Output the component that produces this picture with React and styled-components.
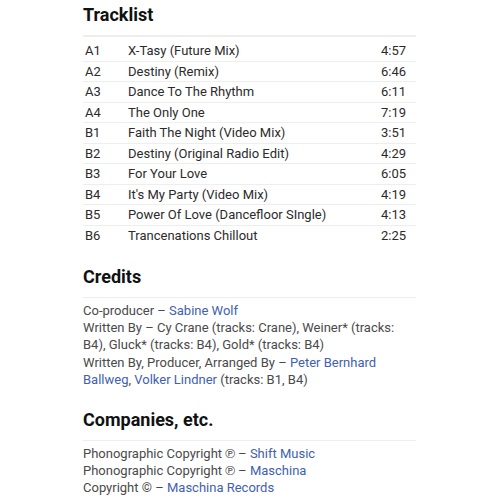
import React from 'react';
import styled, { createGlobalStyle } from 'styled-components';

const GlobalStyle = createGlobalStyle`
  body {
    margin: 0;
    background: #fff;
    font-family: Roboto, "Liberation Sans", sans-serif;
  }
`;

const Page = styled.div`
  width: 333px;
  margin-left: 83px;
  padding-top: 4px;
`;

const Heading = styled.h2`
  margin: ${(p) => p.$top || 0}px 0 ${(p) => p.$bottom || 9}px;
  font-size: 18px;
  line-height: 22px;
  font-weight: 700;
  color: #111;
`;

const Table = styled.table`
  width: 100%;
  border-collapse: collapse;
  border-top: 2px solid #eee;
  font-size: 13px;
  color: #2b2b2b;
`;

const Row = styled.tr`
  border-bottom: 1px solid #eee;
  &:first-child td {
    padding-top: 4px;
  }
  &:last-child {
    border-bottom: none;
  }
`;

const Cell = styled.td`
  padding: 0 ${(p) => (p.$right ? '10px' : '2px')} 0 2px;
  height: 19.5px;
  line-height: 19.5px;
  text-align: ${(p) => (p.$right ? 'right' : 'left')};
  width: ${(p) => p.$w || 'auto'};
  white-space: nowrap;
`;

const List = styled.div`
  border-top: 1px solid #eee;
  padding-top: 4px;
  font-size: 13px;
  line-height: 17.2px;
  color: #4a4a4a;
`;

const Line = styled.div``;

const Link = styled.a`
  color: #4161b0;
  text-decoration: none;
`;

const tracks = [
  ['A1', 'X-Tasy (Future Mix)', '4:57'],
  ['A2', 'Destiny (Remix)', '6:46'],
  ['A3', 'Dance To The Rhythm', '6:11'],
  ['A4', 'The Only One', '7:19'],
  ['B1', 'Faith The Night (Video Mix)', '3:51'],
  ['B2', 'Destiny (Original Radio Edit)', '4:29'],
  ['B3', 'For Your Love', '6:05'],
  ['B4', "It's My Party (Video Mix)", '4:19'],
  ['B5', 'Power Of Love (Dancefloor SIngle)', '4:13'],
  ['B6', 'Trancenations Chillout', '2:25'],
];

export default function App() {
  return (
    <Page>
      <GlobalStyle />
      <Heading $bottom={9}>Tracklist</Heading>
      <Table>
        <tbody>
          {tracks.map(([pos, title, dur]) => (
            <Row key={pos}>
              <Cell $w="39px">{pos}</Cell>
              <Cell>{title}</Cell>
              <Cell $right>{dur}</Cell>
            </Row>
          ))}
        </tbody>
      </Table>

      <Heading $top={21}>Credits</Heading>
      <List>
        <Line>Co-producer – <Link>Sabine Wolf</Link></Line>
        <Line>Written By – Cy Crane (tracks: Crane), Weiner* (tracks: B4), Gluck* (tracks: B4), Gold* (tracks: B4)</Line>
        <Line>
          Written By, Producer, Arranged By – <Link>Peter Bernhard Ballweg</Link>, <Link>Volker Lindner</Link> (tracks: B1, B4)
        </Line>
      </List>

      <Heading $top={20.5}>Companies, etc.</Heading>
      <List>
        <Line>Phonographic Copyright ℗ – <Link>Shift Music</Link></Line>
        <Line>Phonographic Copyright ℗ – <Link>Maschina</Link></Line>
        <Line>Copyright © – <Link>Maschina Records</Link></Line>
      </List>
    </Page>
  );
}
